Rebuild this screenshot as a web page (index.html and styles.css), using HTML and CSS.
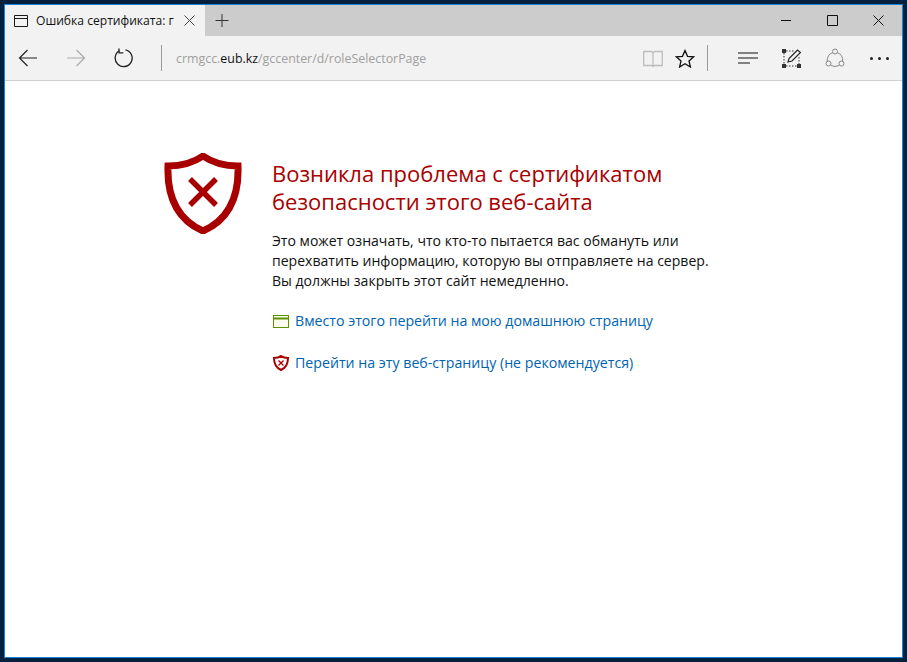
FILE: index.html
```html
<!DOCTYPE html>
<html lang="ru">
<head>
<meta charset="utf-8">
<title>Ошибка сертификата</title>
<link rel="stylesheet" href="styles.css">
</head>
<body>
<div class="window">
  <div class="titlebar">
    <div class="tab">
      <svg class="tab-icon" width="14" height="12" viewBox="0 0 14 12"><path d="M.5.5h13v11H.5zM.5 3.500h13" fill="none" stroke="#1a1a1a"/></svg>
      <span class="tab-title">Ошибка сертификата: г</span>
      <svg class="tab-close" width="11" height="11" viewBox="0 0 11 11"><path d="M.5.5l10 10M10.500.5l-10 10" fill="none" stroke="#444"/></svg>
    </div>
    <svg class="new-tab" width="14" height="15" viewBox="0 0 14 15"><path d="M7 1v13M.5 7.500h13" fill="none" stroke="#333"/></svg>
    <div class="controls">
      <svg width="11" height="11" viewBox="0 0 11 11"><path d="M0 5.500h10" stroke="#111" fill="none"/></svg>
      <svg width="11" height="11" viewBox="0 0 11 11"><path d="M.5.5h10v10H.5z" stroke="#111" fill="none"/></svg>
      <svg width="11" height="11" viewBox="0 0 11 11"><path d="M.5.5l10 10M10.500.5l-10 10" stroke="#111" fill="none"/></svg>
    </div>
  </div>
  <div class="toolbar">
    <div class="nav">
      <svg width="20" height="18" viewBox="0 0 20 18"><path d="M19 9H1.500M9.500 1l-8 8 8 8" fill="none" stroke="#222" stroke-width="1.200"/></svg>
      <svg width="20" height="18" viewBox="0 0 20 18"><path d="M1 9h17.500M10.500 1l8 8-8 8" fill="none" stroke="#aaa" stroke-width="1.200"/></svg>
      <svg class="reload" width="20" height="20" viewBox="0 0 20 20"><path d="M6.300 2.800A8.500 8.500 0 1 0 12.500 1.800" fill="none" stroke="#222" stroke-width="1.300"/><path d="M6 .5v4.300h4.300" fill="none" stroke="#222" stroke-width="1.300"/></svg>
    </div>
    <div class="sep"></div>
    <div class="address"><span class="muted">crmgcc.</span>eub.kz<span class="muted">/gccenter/d/roleSelectorPage</span></div>
    <div class="tools-a">
      <svg width="20" height="17" viewBox="0 0 20 17"><path d="M.7 1.500h8L10 3l1.300-1.500h8v14h-8l-1.300 1-1.300-1h-8zM10 3v13" fill="none" stroke="#bdbdbd" stroke-width="1.300"/></svg>
      <svg width="20" height="19" viewBox="0 0 20 19"><path d="M10 1.500l2.500 5.800 6.200.5-4.700 4.100 1.400 6.100L10 14.700l-5.400 3.300L6 11.900 1.300 7.800l6.200-.5z" fill="none" stroke="#111" stroke-width="1.300"/></svg>
    </div>
    <div class="sep sep-right"></div>
    <div class="tools-b">
      <svg width="20" height="12" viewBox="0 0 20 12"><path d="M0 1h20M0 6h20M0 11h12" fill="none" stroke="#111" stroke-width="1.100"/></svg>
      <svg width="19" height="19" viewBox="0 0 19 19"><path d="M2 4v11M17 8v7M4 2h8M4 17h11" fill="none" stroke="#333" stroke-dasharray="1.500 1.500"/><path d="M0 0h4v4H0zM0 15h4v4H0zM15 15h4v4h-4z" fill="#333"/><path d="M6 13l1-3.500L15.500 1l3 2.500L10 12z" fill="none" stroke="#222" stroke-width="1.200"/></svg>
      <svg width="20" height="20" viewBox="0 0 20 20"><circle cx="10" cy="3.500" r="2.500" fill="none" stroke="#888"/><circle cx="3.500" cy="15.500" r="2.500" fill="none" stroke="#888"/><circle cx="16.500" cy="15.500" r="2.500" fill="none" stroke="#888"/><path d="M7.800 4.500A8 8 0 0 0 2.300 13.300M12.200 4.500A8 8 0 0 1 17.700 13.300M6 17.500a9 9 0 0 0 8 0" fill="none" stroke="#888"/></svg>
      <div class="dots"><i></i><i></i><i></i></div>
    </div>
  </div>
  <main class="page">
    <svg class="shield" width="78" height="81" viewBox="0 0 78 81"><path d="M39 3C29 10 17 13 4 13c-1 28 8 53 35 65 27-12 36-37 35-65C61 13 49 10 39 3z" fill="none" stroke="#a80000" stroke-width="7"/><path d="M26 26l26 26M52 26L26 52" fill="none" stroke="#a80000" stroke-width="5.500"/></svg>
    <div class="content">
      <h1>Возникла проблема с сертификатом безопасности этого веб-сайта</h1>
      <p>Это может означать, что кто-то пытается вас обмануть или перехватить информацию, которую вы отправляете на сервер.<br>Вы должны закрыть этот сайт немедленно.</p>
      <a class="link" href="#">
        <svg width="16" height="13" viewBox="0 0 16 13"><rect x="0.500" y="0.500" width="15" height="12" fill="#fbfbf0" stroke="#5c9400"/><path d="M0 3.500h16" stroke="#5c9400" stroke-width="2"/></svg>
        Вместо этого перейти на мою домашнюю страницу
      </a>
      <a class="link" href="#">
        <svg width="16" height="16" viewBox="0 0 16 16"><path d="M8 1C6 2.500 3.500 3 1 3c0 5 1.500 9.500 7 12 5.500-2.500 7-7 7-12-2.500 0-5-.5-7-2z" fill="#fff" stroke="#a80000" stroke-width="2"/><path d="M5.500 5.500l5 5M10.500 5.500l-5 5" stroke="#a80000" stroke-width="1.300"/></svg>
        Перейти на эту веб-страницу (не рекомендуется)
      </a>
    </div>
  </main>
</div>
</body>
</html>
```
FILE: styles.css
```css
* { box-sizing: border-box; }
html, body { margin: 0; height: 100%; }
body {
  background: #04203f;
  padding: 4px;
  font-family: "Open Sans", "Noto Sans", sans-serif;
  overflow: hidden;
}
.window {
  width: 899px;
  height: 654px;
  border: 1px solid #1a83d8;
  background: #fff;
  display: flex;
  flex-direction: column;
}
.titlebar {
  height: 31px;
  background: #cccccc;
  display: flex;
  align-items: center;
  flex: none;
}
.tab {
  width: 200px;
  height: 31px;
  background: #f2f2f2;
  display: flex;
  align-items: center;
  padding-left: 9px;
  flex: none;
}
.tab-icon { flex: none; }
.tab-title {
  font-size: 12.1px;
  color: #111;
  margin-left: 8px;
  width: 138px;
  white-space: nowrap;
  overflow: hidden;
}
.tab-close { margin-left: 10px; flex: none; }
.new-tab { margin-left: 10px; flex: none; }
.controls {
  margin-left: auto;
  display: flex;
  align-items: center;
  gap: 35px;
  padding-right: 18px;
}
.toolbar {
  height: 45px;
  background: #f2f2f2;
  border-bottom: 1px solid #cfcfcf;
  display: flex;
  align-items: center;
  flex: none;
}
.nav {
  display: flex;
  align-items: center;
  gap: 28px;
  padding-left: 13px;
  width: 156px;
  flex: none;
}
.reload { margin-left: -1px; }
.sep { width: 1px; height: 26px; background: #999; flex: none; }
.address {
  font-size: 12.4px;
  color: #111;
  margin-left: 14px;
  white-space: nowrap;
  flex: 1;
}
.muted { color: #a0a0a0; }
.tools-a { display: flex; align-items: center; gap: 12px; flex: none; }
.sep-right { margin-left: 12px; }
.tools-b {
  display: flex;
  align-items: center;
  gap: 24px;
  padding-left: 30px;
  padding-right: 14px;
  flex: none;
}
.dots { display: flex; gap: 5px; width: 18px; margin-left: 1px; }
.dots i { width: 3px; height: 3px; background: #222; border-radius: 50%; flex: none; }
.page {
  flex: 1;
  display: flex;
  align-items: flex-start;
  padding: 72px 0 0 159px;
}
.shield { flex: none; }
.content { margin-left: 30px; width: 460px; }
h1 {
  margin: 6px 0 0;
  width: 420px;
  font-size: 22px;
  line-height: 28px;
  font-weight: 400;
  color: #a80000;
}
p {
  margin: 16px 0 0;
  width: 450px;
  font-size: 14.07px;
  line-height: 20px;
  color: #111;
}
.link {
  display: flex;
  align-items: center;
  gap: 6px;
  padding-left: 1px;
  font-size: 14.18px;
  line-height: 20px;
  color: #0063b1;
  text-decoration: none;
  white-space: nowrap;
  margin-top: 22px;
}
.link svg { flex: none; }
p + .link { margin-top: 20px; }
```
